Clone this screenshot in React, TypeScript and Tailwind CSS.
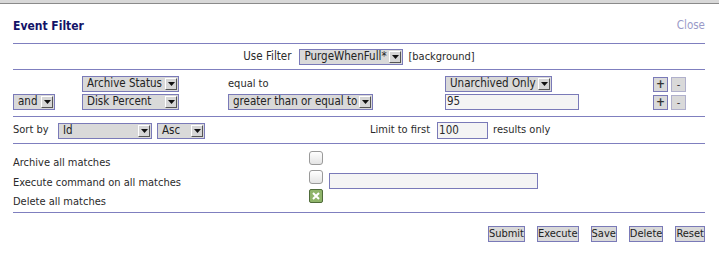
import React from "react";

const font = { fontFamily: "'DejaVu Sans Condensed', 'DejaVu Sans', sans-serif" };

function Arrow() {
  return (
    <span className="flex h-[12px] w-[12px] shrink-0 items-center justify-center border-t border-l border-t-white border-l-white border-b border-r border-b-[#555] border-r-[#555] bg-[#d6d6d6]">
      <svg width="7" height="4" viewBox="0 0 7 4">
        <path d="M0 0 H7 L3.5 4 Z" fill="#111" />
      </svg>
    </span>
  );
}

function Sel({ label, w }: { label: string; w: string }) {
  return (
    <div className={`flex h-[16px] items-center justify-between border border-[#7a7ab8] bg-[#d9d9d9] pl-[4px] pr-[1px] text-[11.5px] text-[#222] ${w}`}>
      <span className="leading-none">{label}</span>
      <Arrow />
    </div>
  );
}

function PM() {
  return (
    <div className="flex gap-[3px]">
      <div className="flex h-[15px] w-[15px] items-center justify-center border border-[#7a7ab8] bg-[#d9d9d9] text-[12px] font-bold text-[#333] leading-none">+</div>
      <div className="flex h-[15px] w-[15px] items-center justify-center border border-[#b0b0cc] bg-[#d9d9d9] text-[#333] leading-none">-</div>
    </div>
  );
}

function Box({ checked }: { checked?: boolean }) {
  if (checked) {
    return (
      <div className="flex h-[14px] w-[14px] items-center justify-center rounded-[2px] border border-[#4f6b3a] bg-[#8fb46a]">
        <svg width="8" height="8" viewBox="0 0 8 8">
          <path d="M1 1 L7 7 M7 1 L1 7" stroke="#fff" strokeWidth="2" />
        </svg>
      </div>
    );
  }
  return <div className="h-[14px] w-[14px] rounded-[3px] border border-[#9a9a9a] bg-gradient-to-b from-[#ffffff] to-[#e4e4e4]" />;
}

function Btn({ label }: { label: string }) {
  return (
    <div className="flex h-[16px] items-center border border-[#7a7ab8] bg-[#d9d9d9] px-0 text-[11px] leading-none text-[#222]">
      {label}
    </div>
  );
}

export default function App() {
  return (
    <div className="h-[256px] w-[719px] bg-white text-[11px] text-[#2a2a2a]" style={font}>
      <div className="h-[4px] border-b border-[#8a8a8a] bg-[#d8d8d8]" />
      <div className="pl-[13px] pr-[14px]">
        <div className="flex h-[40px] items-center justify-between border-b border-[#7f7fbf] pt-[6px] pb-[2px]">
          <span className="text-[12px] font-bold text-[#131368]">Event Filter</span>
          <span className="text-[11.5px] text-[#9a9ac8]">Close</span>
        </div>
        <div className="flex h-[26px] items-center justify-center gap-[8px] border-b border-[#7f7fbf] pt-[1px]">
          <span className="text-[11.5px]">Use Filter</span>
          <div className="flex items-center gap-[5px]">
            <Sel label="PurgeWhenFull*" w="w-[104px]" />
            <span>[background]</span>
          </div>
        </div>
        <div className="flex flex-col gap-[2px] border-b border-[#7f7fbf] pt-[6px] pb-[6px]">
          <div className="flex h-[16px] items-center">
            <div className="w-[69px]" />
            <div className="w-[146px]"><Sel label="Archive Status" w="w-[97px]" /></div>
            <div className="w-[217px]">equal to</div>
            <div className="w-[208px]"><Sel label="Unarchived Only" w="w-[107px]" /></div>
            <PM />
          </div>
          <div className="flex h-[16px] items-center">
            <div className="w-[69px]"><Sel label="and" w="w-[42px]" /></div>
            <div className="w-[146px]"><Sel label="Disk Percent" w="w-[97px]" /></div>
            <div className="w-[217px]"><Sel label="greater than or equal to" w="w-[145px]" /></div>
            <div className="w-[208px]">
              <div className="flex h-[16px] w-[134px] items-center border border-[#7a7ab8] bg-[#f4f4f4] pl-[1px] text-[11.5px] leading-none">95</div>
            </div>
            <PM />
          </div>
        </div>
        <div className="flex h-[27px] items-center border-b border-[#7f7fbf] pt-[1px]">
          <span className="w-[45px]">Sort by</span>
          <Sel label="Id" w="w-[94px]" />
          <div className="ml-[5px]"><Sel label="Asc" w="w-[48px]" /></div>
          <span className="ml-[165px]">Limit to first</span>
          <div className="ml-[7px] flex h-[17px] w-[51px] items-center border border-[#7a7ab8] bg-[#f4f4f4] pl-[1px] text-[11.5px] leading-none">100</div>
          <span className="ml-[5px]">results only</span>
        </div>
        <div className="flex flex-col border-b border-[#7f7fbf] pt-[6px] pb-[3px]">
          <div className="flex h-[19.5px] items-start">
            <span className="mt-[6px] w-[296px] leading-[14px]">Archive all matches</span>
            <div className="mt-[1px]"><Box /></div>
          </div>
          <div className="flex h-[19.5px] items-start">
            <span className="mt-[6px] w-[296px] leading-[14px]">Execute command on all matches</span>
            <div className="mt-[0px]"><Box /></div>
            <div className="ml-[6px] mt-[3px] h-[16px] w-[209px] border border-[#7a7ab8] bg-[#f4f4f4]" />
          </div>
          <div className="flex h-[19.5px] items-start">
            <span className="mt-[6px] w-[296px] leading-[14px]">Delete all matches</span>
            <Box checked />
          </div>
        </div>
        <div className="flex justify-end gap-[12px] pt-[13px]">
          <Btn label="Submit" />
          <Btn label="Execute" />
          <Btn label="Save" />
          <Btn label="Delete" />
          <Btn label="Reset" />
        </div>
      </div>
    </div>
  );
}
